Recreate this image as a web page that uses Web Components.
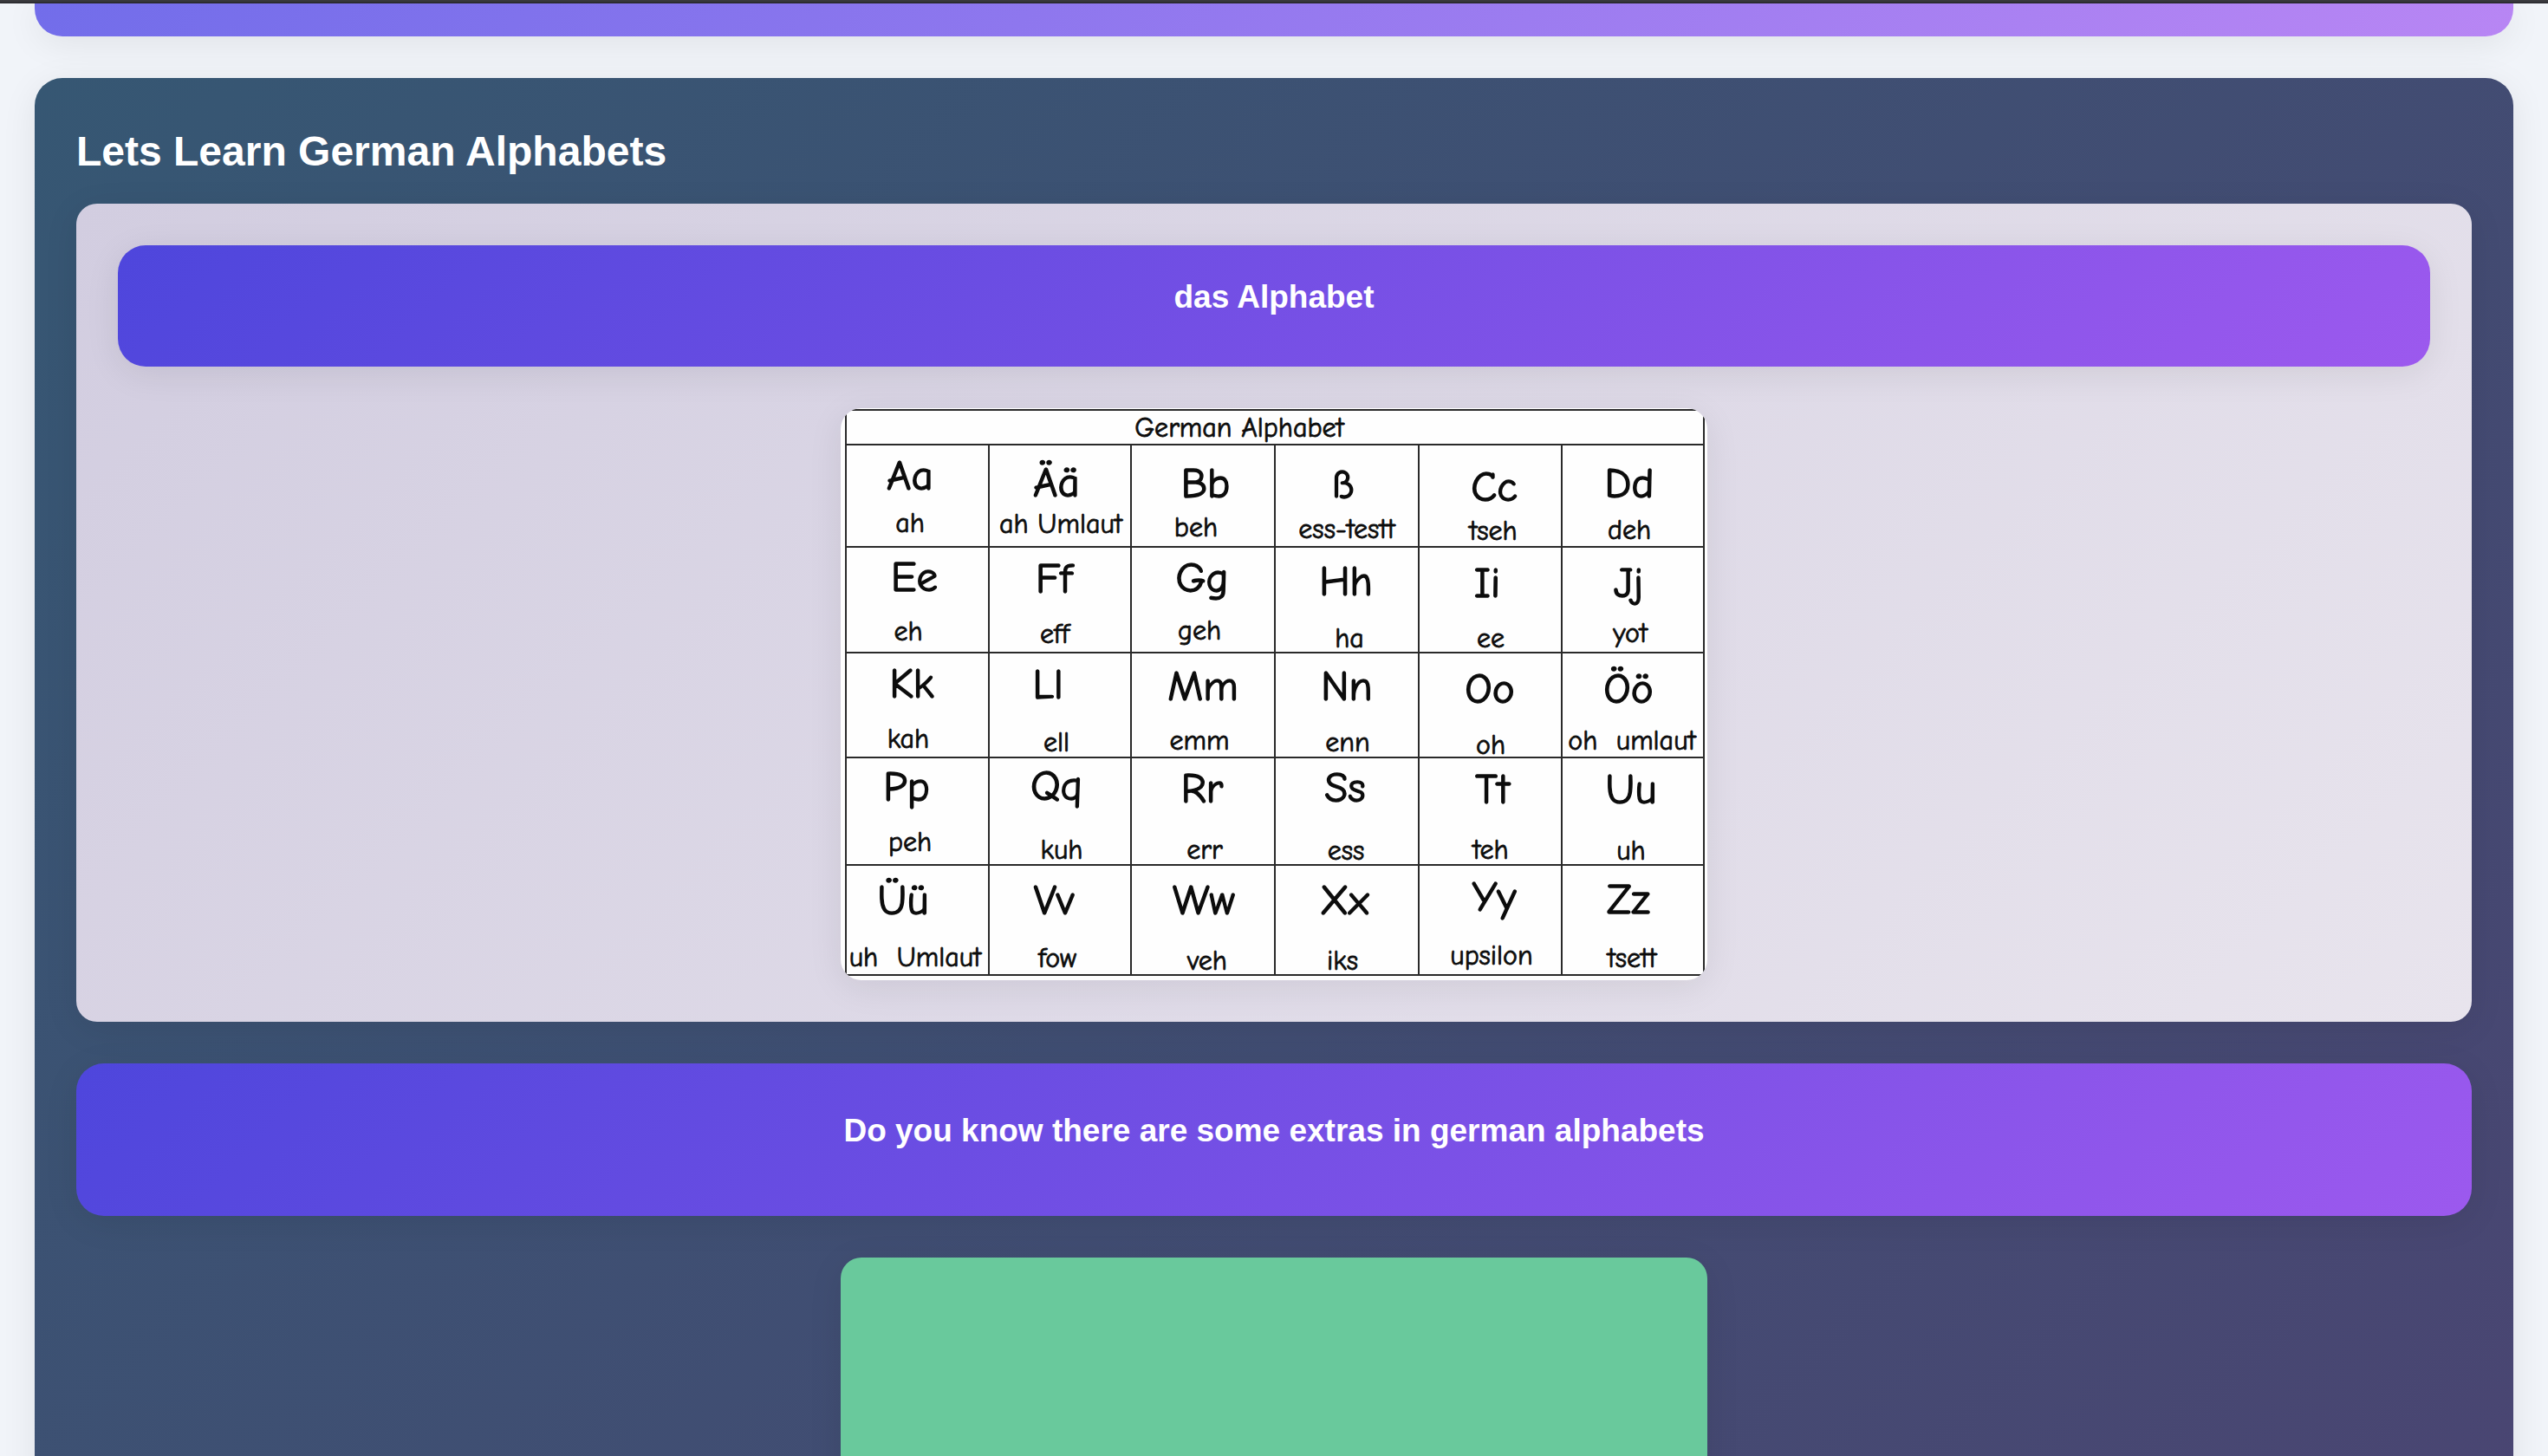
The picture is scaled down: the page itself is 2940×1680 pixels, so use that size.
<!DOCTYPE html>
<html lang="en">
<head>
<meta charset="utf-8">
<title>Lets Learn German Alphabets</title>
<style>
  html, body { margin: 0; height: 100%; }
  body {
    overflow: hidden;
    background: #f1f4f9;
    font-family: "Helvetica Neue", "Liberation Sans", Arial, sans-serif;
    color: #fff;
    --shadow: 0 8px 40px rgba(0, 0, 0, 0.08);
  }
</style>
</head>
<body>
<lesson-page>
  <lesson-card heading="Lets Learn German Alphabets">
    <lesson-panel>
      <lesson-banner size="compact">das Alphabet</lesson-banner>
      <alphabet-chart></alphabet-chart>
    </lesson-panel>
    <lesson-banner>Do you know there are some extras in german alphabets</lesson-banner>
    <media-tile></media-tile>
  </lesson-card>
</lesson-page>

<script>
const define = (name, html, setup) => {
  const template = document.createElement('template');
  template.innerHTML = html;
  customElements.define(name, class extends HTMLElement {
    constructor() {
      super();
      this.attachShadow({ mode: 'open' }).append(template.content.cloneNode(true));
    }
    connectedCallback() { if (setup) setup(this, this.shadowRoot); }
  });
};

define('lesson-page', `
  <style>
    :host { display: block; height: 100%; overflow: hidden; }
    .edge { height: 2px; background: #3b3b3f; border-bottom: 2px solid #2e2e33; }
    main { display: flex; flex-direction: column; gap: 48px; padding: 0 40px 48px; }
    .hero {
      height: 38px;
      border-radius: 0 0 32px 32px;
      background: linear-gradient(135deg, #726dea, #b886f4);
      box-shadow: var(--shadow);
    }
  </style>
  <div class="edge"></div>
  <main>
    <div class="hero"></div>
    <slot></slot>
  </main>`);

define('lesson-card', `
  <style>
    :host {
      display: flex; flex-direction: column; gap: 24px;
      padding: 48px;
      border-radius: 32px;
      background: linear-gradient(135deg, #365773, #4b4472);
      box-shadow: var(--shadow);
    }
    h2 { margin: 0; font-size: 48px; line-height: 73px; }
    .stack { display: flex; flex-direction: column; gap: 48px; }
  </style>
  <h2></h2>
  <div class="stack"><slot></slot></div>`,
  (host, root) => { root.querySelector('h2').textContent = host.getAttribute('heading'); });

define('lesson-panel', `
  <style>
    :host {
      display: flex; flex-direction: column; gap: 48px;
      padding: 48px;
      border-radius: 24px;
      background: linear-gradient(135deg, #d2cde0, #e8e4ed);
      box-shadow: var(--shadow);
    }
  </style>
  <slot></slot>`);

define('lesson-banner', `
  <style>
    :host {
      display: block;
      padding: 48px 48px 68px;
      border-radius: 32px;
      background: linear-gradient(135deg, #4e46dc, #9c59ee);
      box-shadow: var(--shadow);
    }
    :host([size="compact"]) { padding: 30px 32px 50px; }
    h3 { margin: 0; font-size: 37px; line-height: 60px; text-align: center; }
  </style>
  <h3><slot></slot></h3>`);

define('media-tile', `
  <style>
    :host {
      display: block;
      width: 100%; max-width: 1000px; height: 600px;
      align-self: center;
      border-radius: 24px;
      background: #69c99c;
      box-shadow: var(--shadow);
    }
  </style>`);

/* Hand-lettered chart. Rule lines and lettering share one 1000 x 660 drawing space. */
const COLS = [6, 171, 335, 501, 667, 832, 996];
const ROWS = [42, 160, 282, 403, 527, 654];
/* letter, x, baseline, sound, x, baseline */
const LETTERS = [
  [['Aa', 80, 94, 'ah', 80, 143], ['Ää', 249, 102, 'ah Umlaut', 254, 144], ['Bb', 421, 103, 'beh', 410, 148],
   ['ß', 580, 103, 'ess-testt', 584, 150], ['Cc', 754, 107, 'tseh', 753, 152], ['Dd', 910, 103, 'deh', 910, 151]],
  [['Ee', 85, 211, 'eh', 78, 268], ['Ff', 246, 213, 'eff', 247, 271], ['Gg', 417, 212, 'geh', 414, 267],
   ['Hh', 583, 216, 'ha', 587, 276], ['Ii', 746, 218, 'ee', 750, 276], ['Jj', 909, 218, 'yot', 911, 270]],
  [['Kk', 82, 334, 'kah', 78, 392], ['Ll', 239, 335, 'ell', 249, 396], ['Mm', 418, 337, 'emm', 414, 394],
   ['Nn', 584, 337, 'enn', 585, 396], ['Oo', 749, 340, 'oh', 750, 399], ['Öö', 909, 340, 'oh  umlaut', 913, 394]],
  [['Pp', 76, 453, 'peh', 80, 511], ['Qq', 249, 452, 'kuh', 255, 520], ['Rr', 417, 455, 'err', 420, 520],
   ['Ss', 582, 454, 'ess', 583, 521], ['Tt', 752, 456, 'teh', 750, 520], ['Uu', 912, 456, 'uh', 912, 521]],
  [['Üü', 72, 584, 'uh  Umlaut', 86, 644], ['Vv', 246, 584, 'fow', 250, 645], ['Ww', 419, 584, 'veh', 423, 648],
   ['Xx', 581, 584, 'iks', 579, 648], ['Yy', 754, 580, 'upsilon', 751, 642], ['Zz', 909, 583, 'tsett', 913, 645]]
];

define('alphabet-chart', `
  <style>
    :host {
      display: block;
      box-sizing: border-box;
      width: 100%; max-width: 1000px;
      align-self: center;
      padding: 1px 3px 5px 5px;
      border-radius: 24px;
      overflow: hidden;
      background: #fefefe;
      box-shadow: var(--shadow);
      color: #0c0c0c;
      font-family: "Comic Sans MS", "Comic Neue", "Noto Sans", sans-serif;
      font-variant-ligatures: none;
    }
    table { width: 100%; table-layout: fixed; border-collapse: collapse; }
    th, td { padding: 0; border: 2px solid #2a2a2a; font-weight: 400; }
    svg { display: block; width: 100%; overflow: visible; }
    text {
      text-anchor: middle; white-space: pre; font-size: 32px;
      fill: currentColor; stroke: currentColor; stroke-width: 0.8; stroke-linejoin: round;
    }
    .letter { font-size: 49px; stroke-width: 1.4; }
  </style>
  <table><colgroup></colgroup><thead></thead><tbody></tbody></table>`,
  (host, root) => {
    const box = (x, y, right, bottom, body) =>
      `<svg viewBox="${x + 1} ${y + 1} ${right - x - 2} ${bottom - y - 2}">${body}</svg>`;
    root.querySelector('colgroup').innerHTML = COLS.slice(1)
      .map((x, i) => `<col style="width:${(x - COLS[i]) / 9.9}%">`).join('');
    root.querySelector('thead').innerHTML =
      `<tr><th colspan="6">${box(6, 2, 996, 42, '<text x="460" y="33">German Alphabet</text>')}</th></tr>`;
    root.querySelector('tbody').innerHTML = LETTERS.map((row, r) => `<tr>${row.map((c, i) =>
      `<td>${box(COLS[i], ROWS[r], COLS[i + 1], ROWS[r + 1],
        `<text class="letter" x="${c[1]}" y="${c[2]}">${c[0]}</text><text x="${c[4]}" y="${c[5]}">${c[3]}</text>`)}</td>`
    ).join('')}</tr>`).join('');
  });
</script>
</body>
</html>
